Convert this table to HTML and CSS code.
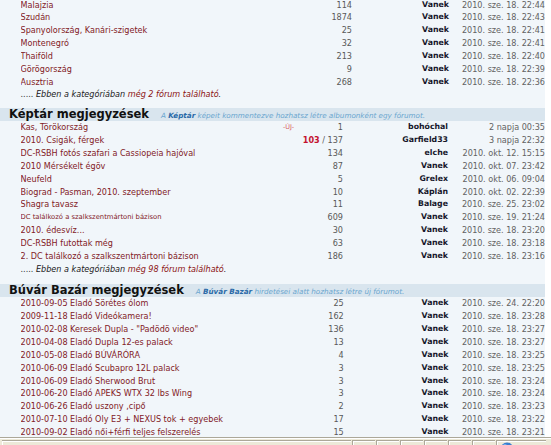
FILE: index.html
```html
<!DOCTYPE html>
<html lang="hu">
<head>
<meta charset="utf-8">
<title>Fórumok</title>
<link rel="stylesheet" href="styles.css">
</head>
<body>
<div class="page">
  <div class="list">
    <section class="cat cat-a">
      <div class="row"><a class="name">Malajzia</a><span class="cnt">114</span><b class="user">Vanek</b><span class="date">2010. sze. 18. 22:44</span></div>
      <div class="row"><a class="name">Szudán</a><span class="cnt">1874</span><b class="user">Vanek</b><span class="date">2010. sze. 18. 22:43</span></div>
      <div class="row"><a class="name">Spanyolország, Kanári-szigetek</a><span class="cnt">25</span><b class="user">Vanek</b><span class="date">2010. sze. 18. 22:41</span></div>
      <div class="row"><a class="name">Montenegró</a><span class="cnt">32</span><b class="user">Vanek</b><span class="date">2010. sze. 18. 22:41</span></div>
      <div class="row"><a class="name">Thaiföld</a><span class="cnt">213</span><b class="user">Vanek</b><span class="date">2010. sze. 18. 22:40</span></div>
      <div class="row"><a class="name">Görögország</a><span class="cnt">9</span><b class="user">Vanek</b><span class="date">2010. sze. 18. 22:39</span></div>
      <div class="row"><a class="name">Ausztria</a><span class="cnt">268</span><b class="user">Vanek</b><span class="date">2010. sze. 18. 22:36</span></div>
      <div class="row more">..... <em>Ebben a kategóriában <a>még 2 fórum található</a>.</em></div>
    </section>

    <section class="cat cat-b">
      <div class="head"><h2>Képtár megjegyzések</h2><p class="desc">A <b>Képtár</b> képeit kommentezve hozhatsz létre albumonként egy fórumot.</p></div>
      <div class="row"><a class="name">Kas, Törökország</a><span class="new">-ÚJ-</span><span class="cnt">1</span><b class="user">bohóchal</b><span class="date">2 napja 00:35</span></div>
      <div class="row"><a class="name">2010. Csigák, férgek</a><span class="cnt"><b class="unread">103</b> / 137</span><b class="user">Garfield33</b><span class="date">3 napja 22:32</span></div>
      <div class="row"><a class="name">DC-RSBH fotós szafari a Cassiopeia hajóval</a><span class="cnt">134</span><b class="user">elche</b><span class="date">2010. okt. 12. 15:15</span></div>
      <div class="row"><a class="name">2010 Mérsékelt égöv</a><span class="cnt">87</span><b class="user">Vanek</b><span class="date">2010. okt. 07. 23:42</span></div>
      <div class="row"><a class="name">Neufeld</a><span class="cnt">5</span><b class="user">Grelex</b><span class="date">2010. okt. 06. 09:04</span></div>
      <div class="row"><a class="name">Biograd - Pasman, 2010. szeptember</a><span class="cnt">10</span><b class="user">Káplán</b><span class="date">2010. okt. 02. 22:39</span></div>
      <div class="row"><a class="name">Shagra tavasz</a><span class="cnt">11</span><b class="user">Balage</b><span class="date">2010. sze. 25. 23:02</span></div>
      <div class="row"><a class="name small">DC találkozó a szalkszentmártoni bázison</a><span class="cnt">609</span><b class="user">Vanek</b><span class="date">2010. sze. 19. 21:24</span></div>
      <div class="row"><a class="name">2010. édesvíz...</a><span class="cnt">30</span><b class="user">Vanek</b><span class="date">2010. sze. 18. 23:20</span></div>
      <div class="row"><a class="name">DC-RSBH futottak még</a><span class="cnt">63</span><b class="user">Vanek</b><span class="date">2010. sze. 18. 23:18</span></div>
      <div class="row"><a class="name">2. DC találkozó a szalkszentmártoni bázison</a><span class="cnt">186</span><b class="user">Vanek</b><span class="date">2010. sze. 18. 23:16</span></div>
      <div class="row more">..... <em>Ebben a kategóriában <a>még 98 fórum található</a>.</em></div>
    </section>

    <section class="cat cat-c">
      <div class="head"><h2>Búvár Bazár megjegyzések</h2><p class="desc">A <b>Búvár Bazár</b> hirdetései alatt hozhatsz létre új fórumot.</p></div>
      <div class="row"><a class="name">2010-09-05 Eladó Sörétes ólom</a><span class="cnt">25</span><b class="user">Vanek</b><span class="date">2010. sze. 24. 22:20</span></div>
      <div class="row"><a class="name">2009-11-18 Eladó Videókamera!</a><span class="cnt">162</span><b class="user">Vanek</b><span class="date">2010. sze. 18. 23:28</span></div>
      <div class="row"><a class="name">2010-02-08 Keresek Dupla - "Padödö video"</a><span class="cnt">136</span><b class="user">Vanek</b><span class="date">2010. sze. 18. 23:27</span></div>
      <div class="row"><a class="name">2010-04-08 Eladó Dupla 12-es palack</a><span class="cnt">13</span><b class="user">Vanek</b><span class="date">2010. sze. 18. 23:27</span></div>
      <div class="row"><a class="name">2010-05-08 Eladó BÚVÁRÓRA</a><span class="cnt">4</span><b class="user">Vanek</b><span class="date">2010. sze. 18. 23:25</span></div>
      <div class="row"><a class="name">2010-06-09 Eladó Scubapro 12L palack</a><span class="cnt">3</span><b class="user">Vanek</b><span class="date">2010. sze. 18. 23:25</span></div>
      <div class="row"><a class="name">2010-06-09 Eladó Sherwood Brut</a><span class="cnt">3</span><b class="user">Vanek</b><span class="date">2010. sze. 18. 23:24</span></div>
      <div class="row"><a class="name">2010-06-20 Eladó APEKS WTX 32 lbs Wing</a><span class="cnt">3</span><b class="user">Vanek</b><span class="date">2010. sze. 18. 23:24</span></div>
      <div class="row"><a class="name">2010-06-26 Eladó uszony ,cipő</a><span class="cnt">2</span><b class="user">Vanek</b><span class="date">2010. sze. 18. 23:23</span></div>
      <div class="row"><a class="name">2010-07-10 Eladó Oly E3 + NEXUS tok + egyebek</a><span class="cnt">17</span><b class="user">Vanek</b><span class="date">2010. sze. 18. 23:22</span></div>
      <div class="row"><a class="name">2010-09-02 Eladó női+férfi teljes felszerelés</a><span class="cnt">15</span><b class="user">Vanek</b><span class="date">2010. sze. 18. 23:21</span></div>
    </section>
  </div>
</div>
<div class="statusbar">
  <div class="panel main"></div>
  <div class="panel"></div>
  <div class="panel"></div>
  <div class="panel"></div>
  <div class="panel"></div>
  <div class="panel"></div>
  <div class="panel"></div>
  <div class="panel zone">
    <svg class="globe" width="14" height="14" viewBox="0 0 14 14"><circle cx="7" cy="7" r="6.5" fill="#3a7fd0"/><path d="M3 5 Q6 2 9 4 Q11 6 8 7 Q5 8 4 6 Z" fill="#5cb85c"/><circle cx="5" cy="4" r="2" fill="#9fd0ff" opacity="0.6"/></svg>
  </div>
</div>
</body>
</html>
```
FILE: styles.css
```css
* {
  box-sizing: border-box;
  margin: 0;
  padding: 0;
}

html, body {
  background: #ffffff;
}

body {
  width: 551px;
  height: 445px;
  overflow: hidden;
  display: flex;
  flex-direction: column;
  font-family: "DejaVu Sans", Verdana, sans-serif;
  font-size: 8.1px;
  color: #333;
}

.page {
  width: 545px;
  height: 436.5px;
  flex: none;
  overflow: hidden;
  background: #f1f6fa;
}

.list {
  margin-top: -1.45px;
}

.cat-b {
  margin-top: 6.5px;
}

.cat-c {
  margin-top: 8.5px;
}

.head {
  display: flex;
  align-items: baseline;
  gap: 12px;
  height: 13.5px;
  padding-left: 9px;
  background: #d9e5ee;
}

.head h2 {
  font-size: 11.5px;
  line-height: 13.5px;
  font-weight: bold;
  color: #111;
  white-space: nowrap;
}

.desc {
  font-size: 7.2px;
  font-style: italic;
  color: #6aa6cf;
  white-space: nowrap;
}

.desc b {
  color: #2a6aa8;
}

.row {
  display: grid;
  align-items: center;
  height: 12.85px;
  line-height: 12.85px;
  padding-left: 20.5px;
  white-space: nowrap;
}

.cat-a .row {
  grid-template-columns: [name] 1fr [new] 0 [cnt] 51px [user] 97px [date] 96px;
}

.cat-b .row {
  grid-template-columns: [name] 1fr [new] 25px [cnt] 42px [user] 105px [date] 97px;
}

.cat-c .row {
  grid-template-columns: [name] 1fr [new] 0 [cnt] 42.7px [user] 104.8px [date] 96.5px;
}

.name {
  grid-column: name;
  color: #82201f;
  overflow: hidden;
}

.name.small {
  font-size: 6.8px;
}

.new {
  grid-column: new;
  text-align: center;
  color: #d85a5a;
  font-size: 6.5px;
}

.cnt {
  grid-column: cnt;
  text-align: right;
  color: #585858;
}

.unread {
  color: #c4122f;
}

.user {
  grid-column: user;
  text-align: right;
  color: #16162a;
  font-size: 7.8px;
}

.date {
  grid-column: date;
  text-align: right;
  color: #626262;
}

.more {
  display: block;
  color: #333;
}

.more em {
  color: #1a1a1a;
}

.more a {
  color: #8a1010;
}

.statusbar {
  flex: 1;
  display: flex;
  gap: 1px;
  padding: 2px 2px 0;
  background: #ece9d8;
  border-top: 1px solid #aca899;
  box-shadow: inset 0 1px 0 #ffffff;
}

.panel {
  width: 23px;
  height: 18px;
  border-left: 1px solid #aca899;
  border-top: 1px solid #aca899;
  box-shadow: inset 1px 1px 0 #fff;
}

.panel.main {
  width: 349px;
  border-left: none;
}

.panel.zone {
  width: 50px;
  display: flex;
  padding: 1px 3px;
}

.globe {
  flex: none;
}
```
